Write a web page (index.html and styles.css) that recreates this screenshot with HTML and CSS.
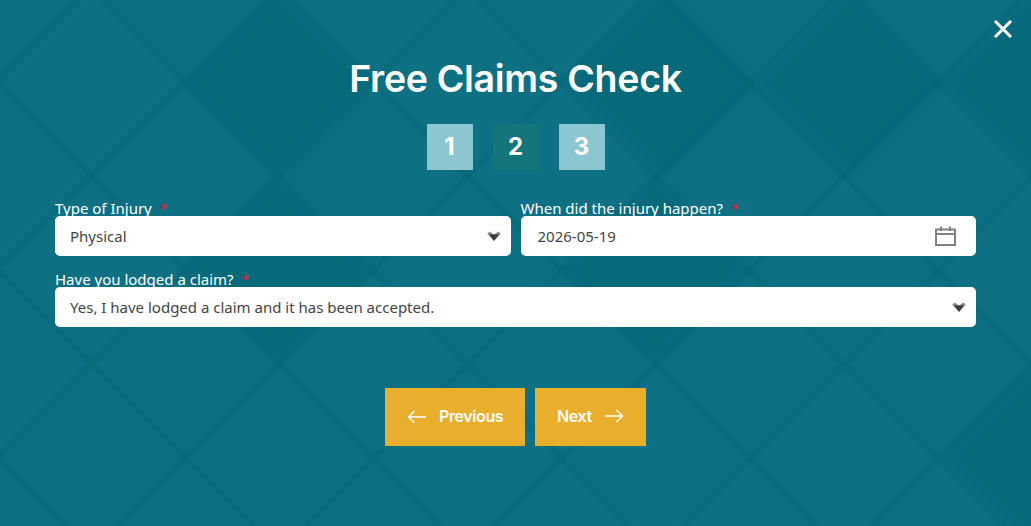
FILE: index.html
```html
<!DOCTYPE html>
<html lang="en">
<head>
<meta charset="utf-8">
<title>Free Claims Check</title>
<link rel="stylesheet" href="styles.css">
</head>
<body>
<main class="modal">
  <svg class="pattern" viewBox="0 0 1031 526" aria-hidden="true">
    <defs>
      <filter id="soft" x="-20%" y="-20%" width="140%" height="140%"><feGaussianBlur stdDeviation="6"/></filter>
      <filter id="softer" x="-20%" y="-20%" width="140%" height="140%"><feGaussianBlur stdDeviation="1.200"/></filter>
    </defs>
    <g fill="#0a6173" fill-opacity="0.5" filter="url(#soft)">
      <path d="M278 -11L372 83L278 177L184 83Z"/>
      <path d="M278 176L372 270L278 364L184 270Z"/>
      <path d="M655 176L749 270L655 364L561 270Z"/>
      <path d="M1037 364L1131 458L1037 552L943 458Z"/>
      <path d="M850 -11L944 83L850 177L756 83Z"/>
      <path d="M662 -11L756 83L662 177L568 83Z"/>
      <path d="M1037 -11L1131 83L1037 177L943 83Z"/>
    </g>
    <g fill="none" stroke="#0a6272" stroke-opacity="0.33" stroke-width="6" filter="url(#softer)">
      <path d="M98 -20L-482 560M286 -20L-294 560M475 -20L-105 560M663 -20L83 560M852 -20L272 560M1040 -20L460 560M1229 -20L649 560M1417 -20L837 560M1606 -20L1026 560"/>
      <path d="M-480 -20L100 560M-292 -20L288 560M-105 -20L475 560M83 -20L663 560M271 -20L851 560M459 -20L1039 560M647 -20L1227 560M835 -20L1415 560"/>
    </g>
  </svg>
  <button class="close" type="button" aria-label="Close">
    <svg viewBox="0 0 20 20" width="20" height="20"><path d="M2 2L18 18M18 2L2 18" stroke="#fff" stroke-width="3" fill="none"/></svg>
  </button>
  <h1 class="title">Free Claims Check</h1>
  <ol class="steps">
    <li class="step">1</li>
    <li class="step step-active">2</li>
    <li class="step">3</li>
  </ol>
  <form class="form">
    <div class="row">
      <div class="field">
        <label class="label">Type of Injury <span class="req">*</span></label>
        <div class="control">
          <span>Physical</span>
          <svg class="chev" viewBox="0 0 14 10" width="14" height="10"><path d="M0 3L2.500 0.500L7 3.500L11.500 0.500L14 3L7 6Z" fill="#8a8a8a"/><path d="M1.500 3.500L7 3.500L12.500 3.500L7 10Z" fill="#3d3d3d"/></svg>
        </div>
      </div>
      <div class="field">
        <label class="label">When did the injury happen? <span class="req">*</span></label>
        <div class="control control-date">
          <span>2026-05-19</span>
          <svg class="cal" viewBox="0 0 21 20" width="21" height="20"><path d="M1 3.500H20V19H1ZM1 8H20M6 0.500V5M15 0.500V5" fill="none" stroke="#808080" stroke-width="2"/></svg>
        </div>
      </div>
    </div>
    <div class="row">
      <div class="field">
        <label class="label">Have you lodged a claim? <span class="req">*</span></label>
        <div class="control">
          <span>Yes, I have lodged a claim and it has been accepted.</span>
          <svg class="chev" viewBox="0 0 14 10" width="14" height="10"><path d="M0 3L2.500 0.500L7 3.500L11.500 0.500L14 3L7 6Z" fill="#8a8a8a"/><path d="M1.500 3.500L7 3.500L12.500 3.500L7 10Z" fill="#3d3d3d"/></svg>
        </div>
      </div>
    </div>
  </form>
  <div class="actions">
    <button class="btn btn-prev" type="button">
      <svg viewBox="0 0 20 14" width="20" height="14"><path d="M19 7H1.500M7.500 1L1.500 7L7.500 13" fill="none" stroke="#fff" stroke-width="1.400"/></svg>
      <span class="btn-text">Previous</span>
    </button>
    <button class="btn btn-next" type="button">
      <span class="btn-text">Next</span>
      <svg class="arrow-next" viewBox="0 0 20 14" width="20" height="14"><path d="M1 7H18.500M12.500 1L18.500 7L12.500 13" fill="none" stroke="#fff" stroke-width="1.400"/></svg>
    </button>
  </div>
</main>
</body>
</html>
```

FILE: styles.css
```css
* { box-sizing: border-box; }
html, body { margin: 0; height: 100%; }
body { font-family: "Noto Sans", "Open Sans", sans-serif; background: #0e7083; overflow: hidden; }
.modal { position: relative; width: 1031px; height: 526px; padding: 56px 55px 0; background: #0e7083; overflow: hidden; }
.pattern { position: absolute; inset: 0; width: 100%; height: 100%; }
.close { position: absolute; top: 19px; right: 18px; width: 20px; height: 20px; padding: 0; border: 0; background: none; }
.title { position: relative; margin: 0; text-align: center; font-family: Inter, sans-serif; font-size: 37.500px; line-height: 46px; font-weight: 600; letter-spacing: -0.3px; color: #fff; }
.steps { position: relative; display: flex; justify-content: center; gap: 20px; margin: 22px 0 0; padding: 0; list-style: none; }
.step { width: 46px; height: 46px; padding-bottom: 2px; display: flex; align-items: center; justify-content: center; background: #8cc6d0; color: #fff; font-family: Inter, sans-serif; font-size: 24px; font-weight: 700; }
.step-active { background: #14757a; }
.form { position: relative; margin-top: 30px; display: flex; flex-direction: column; gap: 15px; }
.row { display: flex; gap: 10px; }
.field { flex: 1 1 0; min-width: 0; }
.label { display: block; height: 16px; font-size: 15px; line-height: 16px; color: #fff; white-space: nowrap; }
.req { color: #d9233f; margin-left: 4px; }
.control { position: relative; height: 40px; display: flex; align-items: center; justify-content: space-between; padding: 0 10px 0 15px; background: #fff; border-radius: 5px; font-size: 15px; color: #444; }
.control-date { padding: 0 20px 0 17px; }
.actions { position: relative; display: flex; justify-content: center; gap: 10px; margin-top: 61px; }
.btn { height: 58px; display: flex; align-items: center; gap: 12px; border: 0; background: #e8ae2c; color: #fff; font-family: Inter, sans-serif; font-size: 16px; font-weight: 600; letter-spacing: -0.4px; }
.btn-text { margin-bottom: 2px; }
.btn-prev { width: 140px; padding: 0 0 0 22px; }
.btn-next { width: 111px; padding: 0 0 0 22px; }
.arrow-next { margin-bottom: 3px; }
```
